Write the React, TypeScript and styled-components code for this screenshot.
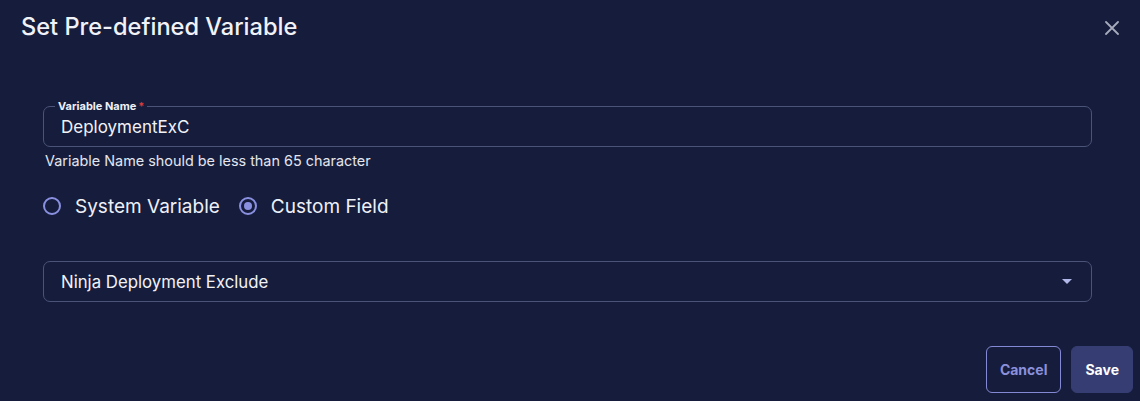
import React from "react";
import styled, { createGlobalStyle } from "styled-components";

const Global = createGlobalStyle`
  html, body { margin: 0; padding: 0; background: #161d3c; }
  body { font-family: Inter, "Noto Sans", sans-serif; color: #eef0f8; }
  * { box-sizing: border-box; }
`;

const Dialog = styled.div`
  width: 1140px;
  height: 401px;
  background: #161d3c;
  display: flex;
  flex-direction: column;
  overflow: hidden;
`;

const Header = styled.div`
  display: flex;
  justify-content: space-between;
  align-items: flex-start;
  padding: 12px 20px 0 21px;
  height: 56px;
`;

const Title = styled.h2`
  margin: 0;
  font-size: 23.6px;
  font-weight: 500;
  line-height: 30px;
  color: #f1f2f8;
`;

const CloseButton = styled.button`
  background: none;
  border: none;
  padding: 0;
  margin-top: 8px;
  width: 16px;
  height: 16px;
  color: #a6aabb;
  display: flex;
  align-items: center;
  justify-content: center;
`;

const Body = styled.div`
  display: flex;
  flex-direction: column;
  padding: 50px 48px 0 43px;
`;

const Field = styled.div`
  position: relative;
  padding: 0 17px;
  height: 41px;
  border: 1px solid #4b5378;
  border-radius: 7px;
  display: flex;
  align-items: center;
`;

const Legend = styled.span`
  position: absolute;
  top: -7px;
  left: 11px;
  padding: 0 3px;
  background: #161d3c;
  font-size: 11px;
  font-weight: 700;
  line-height: 13px;
  color: #eef0f8;
`;

const Required = styled.span`
  color: #d63b3b;
  margin-left: 2px;
`;

const Value = styled.span`
  font-size: 17px;
  line-height: 20px;
  color: #f1f2f8;
  padding-top: 1px;
`;

const Helper = styled.div`
  margin: 5px 0 0 2px;
  font-size: 14.4px;
  line-height: 17px;
  color: #e3e5ef;
`;

const RadioGroup = styled.div`
  display: flex;
  align-items: center;
  gap: 19px;
  margin-top: 25px;
  height: 24px;
`;

const RadioLabel = styled.label`
  display: flex;
  align-items: center;
  gap: 14px;
  font-size: 19px;
  color: #eef0f8;
`;

const RadioCircle = styled.span<{ $checked?: boolean }>`
  width: 18px;
  height: 18px;
  border-radius: 50%;
  border: 2px solid #8a90e0;
  display: flex;
  align-items: center;
  justify-content: center;
  &::after {
    content: "";
    width: 8px;
    height: 8px;
    border-radius: 50%;
    background: #8a90e0;
    display: ${(p) => (p.$checked ? "block" : "none")};
  }
`;

const Select = styled.div`
  margin-top: 43px;
  height: 41px;
  border: 1px solid #4b5378;
  border-radius: 7px;
  display: flex;
  align-items: center;
  justify-content: space-between;
  padding: 0 19px 0 17px;
  font-size: 16.8px;
  color: #f1f2f8;
`;

const Caret = styled.span`
  width: 0;
  height: 0;
  border-left: 5px solid transparent;
  border-right: 5px solid transparent;
  border-top: 5px solid #b3b8ea;
`;

const Footer = styled.div`
  display: flex;
  justify-content: flex-end;
  gap: 10px;
  padding: 44px 7px 0 0;
`;

const Button = styled.button<{ $primary?: boolean }>`
  height: 47px;
  padding: 0 13px;
  border-radius: 6px;
  font-family: Inter, "Noto Sans", sans-serif;
  font-size: 14px;
  font-weight: 700;
  border: 1px solid ${(p) => (p.$primary ? "#353d73" : "#8489d6")};
  background: ${(p) => (p.$primary ? "#353d73" : "transparent")};
  color: ${(p) => (p.$primary ? "#ffffff" : "#8b90dc")};
`;

export default function App() {
  return (
    <>
      <Global />
      <Dialog>
        <Header>
          <Title>Set Pre-defined Variable</Title>
          <CloseButton aria-label="close">
            <svg width="14" height="14" viewBox="0 0 14 14">
              <path d="M1 1L13 13M13 1L1 13" stroke="currentColor" strokeWidth="1.8" strokeLinecap="round" />
            </svg>
          </CloseButton>
        </Header>
        <Body>
          <Field>
            <Legend>
              Variable Name<Required>*</Required>
            </Legend>
            <Value>DeploymentExC</Value>
          </Field>
          <Helper>Variable Name should be less than 65 character</Helper>
          <RadioGroup>
            <RadioLabel>
              <RadioCircle />
              System Variable
            </RadioLabel>
            <RadioLabel>
              <RadioCircle $checked />
              Custom Field
            </RadioLabel>
          </RadioGroup>
          <Select>
            <span>Ninja Deployment Exclude</span>
            <Caret />
          </Select>
        </Body>
        <Footer>
          <Button>Cancel</Button>
          <Button $primary>Save</Button>
        </Footer>
      </Dialog>
    </>
  );
}
